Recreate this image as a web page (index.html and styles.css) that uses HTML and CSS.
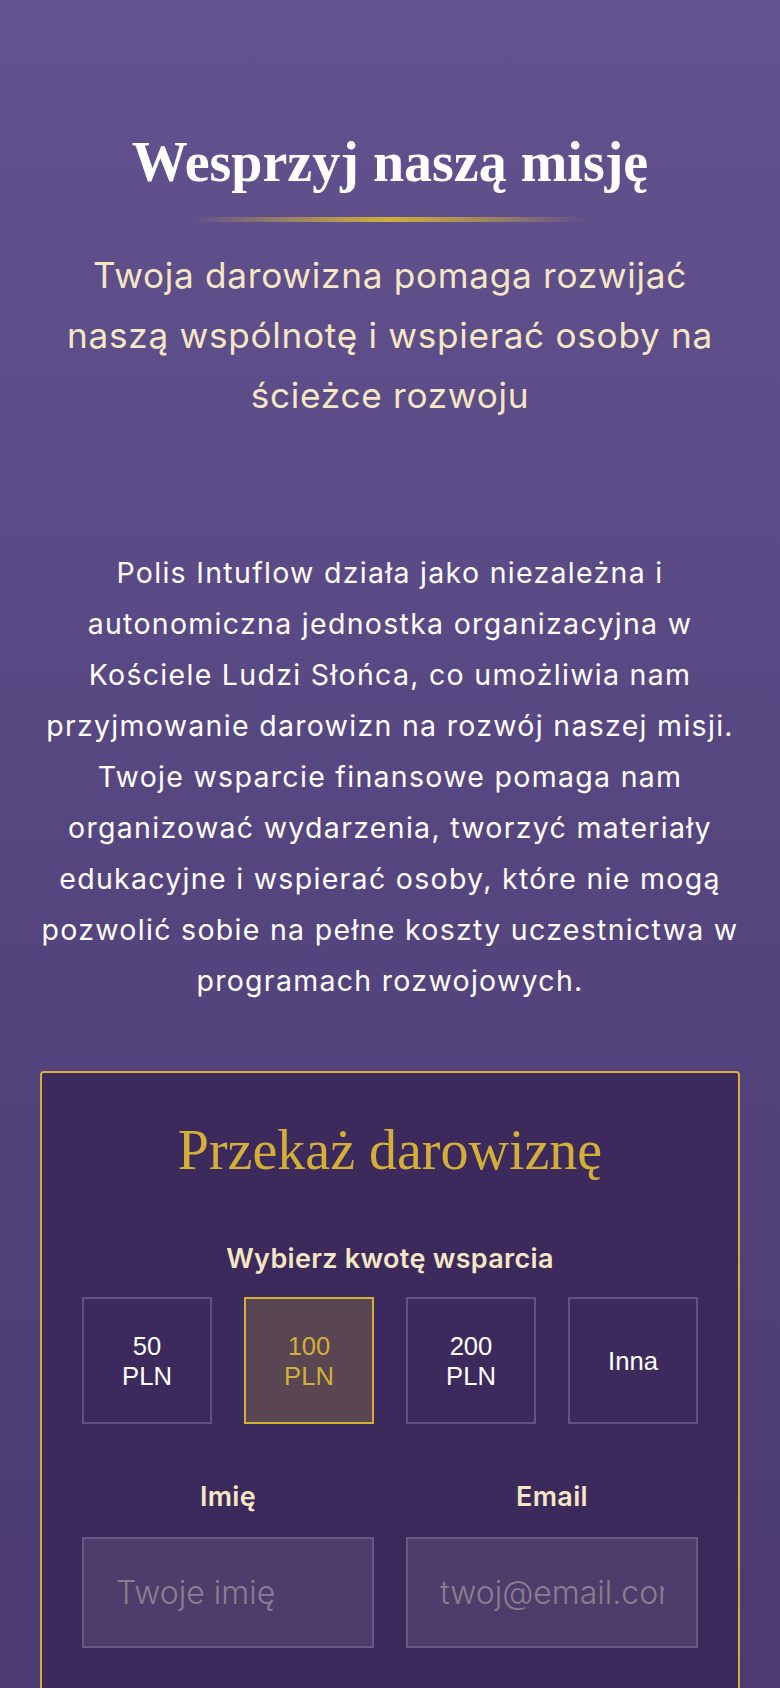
FILE: index.html
```html
<!DOCTYPE html>
<html lang="pl">
<head>
<meta charset="utf-8">
<meta name="viewport" content="width=device-width, initial-scale=1">
<title>Wesprzyj naszą misję</title>
<link rel="stylesheet" href="styles.css">
</head>
<body>
<main class="support">
  <header class="intro">
    <h1 class="intro-title">Wesprzyj naszą misję</h1>
    <div class="divider"></div>
    <p class="intro-lead">Twoja darowizna pomaga rozwijać naszą wspólnotę i wspierać osoby na ścieżce rozwoju</p>
  </header>

  <p class="about">Polis Intuflow działa jako niezależna i autonomiczna jednostka organizacyjna w Kościele Ludzi Słońca, co umożliwia nam przyjmowanie darowizn na rozwój naszej misji. Twoje wsparcie finansowe pomaga nam organizować wydarzenia, tworzyć materiały edukacyjne i wspierać osoby, które nie mogą pozwolić sobie na pełne koszty uczestnictwa w programach rozwojowych.</p>

  <section class="donate-card">
    <h2 class="card-title">Przekaż darowiznę</h2>
    <p class="field-label">Wybierz kwotę wsparcia</p>
    <div class="amounts">
      <button class="amount" type="button">50 PLN</button>
      <button class="amount is-active" type="button">100 PLN</button>
      <button class="amount" type="button">200 PLN</button>
      <button class="amount" type="button">Inna</button>
    </div>
    <div class="fields">
      <label class="field">
        <span class="field-label">Imię</span>
        <input class="input" type="text" placeholder="Twoje imię">
      </label>
      <label class="field">
        <span class="field-label">Email</span>
        <input class="input" type="email" placeholder="twoj@email.com">
      </label>
    </div>
  </section>
</main>
</body>
</html>
```

FILE: styles.css
```css
* {
  box-sizing: border-box;
}

html {
  background: #4a3a71;
}

body {
  margin: 0;
  min-height: 1688px;
  background: linear-gradient(180deg, #62528f 0px, #4a3a71 1700px);
  font-family: "Inter", "Noto Sans", sans-serif;
  color: #ffffff;
}

.support {
  padding: 129px 40px 60px;
  display: flex;
  flex-direction: column;
  align-items: center;
}

.intro {
  display: flex;
  flex-direction: column;
  align-items: center;
  width: 100%;
}

.intro-title {
  margin: 0;
  font-family: "Liberation Serif", "DejaVu Serif", serif;
  font-weight: 700;
  font-size: 56px;
  line-height: 1.2;
  color: #ffffff;
  text-align: center;
}

.divider {
  width: 396px;
  height: 5px;
  margin-top: 21px;
  background: linear-gradient(90deg, rgba(212, 175, 55, 0) 0%, rgba(205, 176, 62, 0.55) 25%, #cdb03c 50%, rgba(205, 176, 62, 0.55) 75%, rgba(212, 175, 55, 0) 100%);
  border-radius: 3px;
}

.intro-lead {
  max-width: 680px;
  margin: 23px 0 0;
  font-size: 35.2px;
  line-height: 60px;
  font-weight: 400;
  letter-spacing: 0.7px;
  color: #f5e6c4;
  text-align: center;
}

.about {
  margin: 122px -6px 0;
  font-size: 28.5px;
  line-height: 51px;
  font-weight: 400;
  letter-spacing: 1.3px;
  color: #ffffff;
  text-align: center;
}

.donate-card {
  width: 700px;
  margin-top: 65px;
  padding: 44px 40px 60px;
  background: #3c2a5d;
  border: 2px solid #d4af37;
  border-radius: 4px;
  display: flex;
  flex-direction: column;
  align-items: stretch;
}

.card-title {
  margin: 0;
  font-family: "Liberation Serif", "DejaVu Serif", serif;
  font-weight: 400;
  font-size: 56px;
  line-height: 1.2;
  color: #d4af37;
  text-align: center;
}

.field-label {
  display: block;
  margin: 0;
  font-size: 27px;
  line-height: 38px;
  font-weight: 600;
  letter-spacing: 0.3px;
  color: #f5e6c4;
  text-align: center;
}

.donate-card > .field-label {
  margin-top: 56px;
}

.amounts {
  display: grid;
  grid-template-columns: repeat(4, 1fr);
  gap: 32px;
  margin-top: 19px;
}

.amount {
  height: 127px;
  padding: 0 24px;
  display: flex;
  align-items: center;
  justify-content: center;
  background: transparent;
  border: 2px solid #615380;
  border-radius: 0;
  font-family: "Liberation Sans", Arial, sans-serif;
  font-size: 25.6px;
  line-height: 30px;
  color: #ffffff;
  text-align: center;
  cursor: pointer;
}

.amount.is-active {
  background: #5a4552;
  border-color: #d4af37;
  color: #d4af37;
}

.fields {
  display: grid;
  grid-template-columns: 1fr 1fr;
  gap: 32px;
  margin-top: 54px;
}

.field {
  display: flex;
  flex-direction: column;
  gap: 21px;
}

.input {
  width: 100%;
  height: 111px;
  padding: 0 32px;
  background: #4e3d6b;
  border: 2px solid #665888;
  border-radius: 0;
  font-family: "Inter", "Noto Sans", sans-serif;
  font-size: 32px;
  color: #ffffff;
  outline: none;
}

.input::placeholder {
  color: #86808f;
  font-weight: 300;
}
```
